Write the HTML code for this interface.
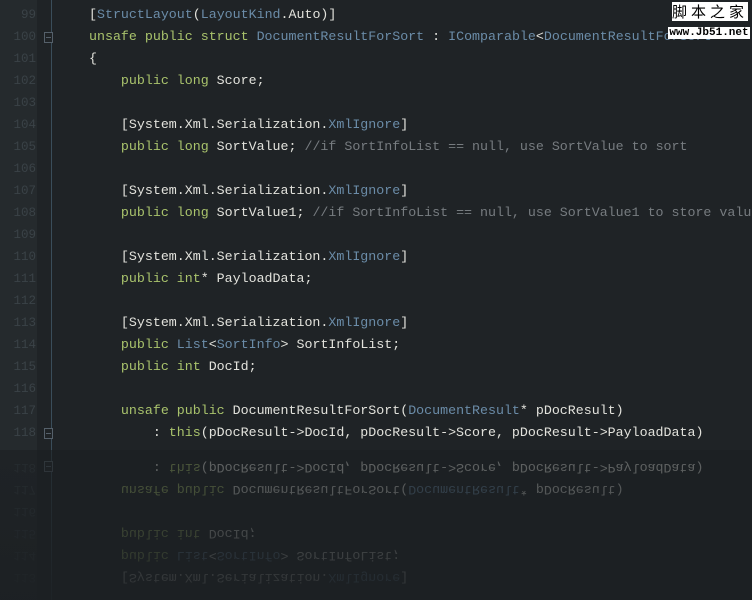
<!DOCTYPE html>
<html><head><meta charset="utf-8"><style>
*{margin:0;padding:0}
html,body{width:752px;height:600px;overflow:hidden}
body{background:#1e2225;position:relative;font-family:"Liberation Mono",monospace;font-size:13.3px}
.ed{position:absolute;left:0;top:0;width:752px;height:450px;overflow:hidden;background:#1f2326}
.gut{position:absolute;left:0;top:0;width:37px;height:100%;background:#252a2d}
.vl{position:absolute;left:51px;top:0;width:1px;height:100%;background:#3a4d5a}
.ln{position:absolute;left:0;width:752px;height:22px;line-height:22px;white-space:pre;color:#e2e2dc;overflow:hidden}
.n{position:absolute;left:0;width:36px;text-align:right;color:#3a4247;font-size:12.5px}
.c{position:absolute;left:89px}
.f{position:absolute;left:44px;top:6px;width:7px;height:9px;border:1px solid #55606a;background:#1f2326;font-size:0}
.f::after{content:"";position:absolute;left:1px;top:4px;width:5px;height:1px;background:#55606a}
.k{color:#a9c36c}.t{color:#6b8ca8}.m{color:#777c80}
.rf{position:absolute;left:0;top:450px;width:752px;height:150px;overflow:hidden;background:#1c2023}
.fl{position:absolute;left:0;top:0;width:752px;height:450px;transform:scaleY(-1);opacity:.36}
.fade{position:absolute;left:0;top:0;width:752px;height:150px;background:linear-gradient(rgba(28,32,35,0),rgba(28,32,35,.8))}
.wm{position:absolute;left:668px;top:2px;width:82px;text-align:center;font-family:"Noto Sans CJK SC",sans-serif;color:#000}
.wm .a{font-size:15px;letter-spacing:4px;background:#fff;line-height:19px;width:76px;margin-left:4px}
.wm .b{font-family:"Liberation Mono",monospace;font-size:11px;background:#fff;line-height:12px;margin-top:6px;font-weight:bold}
</style></head><body>
<div class="ed">
<div class="gut"></div><div class="vl"></div>
<div class="ln" style="top:4px"><span class="n">99</span><span class="c">[<span class="t">StructLayout</span>(<span class="t">LayoutKind</span>.Auto)]</span></div>
<div class="ln" style="top:26px"><span class="n">100</span><span class="f"></span><span class="c"><span class="k">unsafe public struct</span> <span class="t">DocumentResultForSort</span> : <span class="t">IComparable</span>&lt;<span class="t">DocumentResultForSort</span>&gt;</span></div>
<div class="ln" style="top:48px"><span class="n">101</span><span class="c">{</span></div>
<div class="ln" style="top:70px"><span class="n">102</span><span class="c">    <span class="k">public long</span> Score;</span></div>
<div class="ln" style="top:92px"><span class="n">103</span></div>
<div class="ln" style="top:114px"><span class="n">104</span><span class="c">    [System.Xml.Serialization.<span class="t">XmlIgnore</span>]</span></div>
<div class="ln" style="top:136px"><span class="n">105</span><span class="c">    <span class="k">public long</span> SortValue; <span class="m">//if SortInfoList == null, use SortValue to sort</span></span></div>
<div class="ln" style="top:158px"><span class="n">106</span></div>
<div class="ln" style="top:180px"><span class="n">107</span><span class="c">    [System.Xml.Serialization.<span class="t">XmlIgnore</span>]</span></div>
<div class="ln" style="top:202px"><span class="n">108</span><span class="c">    <span class="k">public long</span> SortValue1; <span class="m">//if SortInfoList == null, use SortValue1 to store value</span></span></div>
<div class="ln" style="top:224px"><span class="n">109</span></div>
<div class="ln" style="top:246px"><span class="n">110</span><span class="c">    [System.Xml.Serialization.<span class="t">XmlIgnore</span>]</span></div>
<div class="ln" style="top:268px"><span class="n">111</span><span class="c">    <span class="k">public int</span>* PayloadData;</span></div>
<div class="ln" style="top:290px"><span class="n">112</span></div>
<div class="ln" style="top:312px"><span class="n">113</span><span class="c">    [System.Xml.Serialization.<span class="t">XmlIgnore</span>]</span></div>
<div class="ln" style="top:334px"><span class="n">114</span><span class="c">    <span class="k">public</span> <span class="t">List</span>&lt;<span class="t">SortInfo</span>&gt; SortInfoList;</span></div>
<div class="ln" style="top:356px"><span class="n">115</span><span class="c">    <span class="k">public int</span> DocId;</span></div>
<div class="ln" style="top:378px"><span class="n">116</span></div>
<div class="ln" style="top:400px"><span class="n">117</span><span class="c">    <span class="k">unsafe public</span> DocumentResultForSort(<span class="t">DocumentResult</span>* pDocResult)</span></div>
<div class="ln" style="top:422px"><span class="n">118</span><span class="f"></span><span class="c">        : <span class="k">this</span>(pDocResult-&gt;DocId, pDocResult-&gt;Score, pDocResult-&gt;PayloadData)</span></div>
</div>
<div class="rf">
<div class="fl">
<div class="gut"></div><div class="vl"></div>
<div class="ln" style="top:312px"><span class="n">113</span><span class="c">    [System.Xml.Serialization.<span class="t">XmlIgnore</span>]</span></div>
<div class="ln" style="top:334px"><span class="n">114</span><span class="c">    <span class="k">public</span> <span class="t">List</span>&lt;<span class="t">SortInfo</span>&gt; SortInfoList;</span></div>
<div class="ln" style="top:356px"><span class="n">115</span><span class="c">    <span class="k">public int</span> DocId;</span></div>
<div class="ln" style="top:378px"><span class="n">116</span></div>
<div class="ln" style="top:400px"><span class="n">117</span><span class="c">    <span class="k">unsafe public</span> DocumentResultForSort(<span class="t">DocumentResult</span>* pDocResult)</span></div>
<div class="ln" style="top:422px"><span class="n">118</span><span class="f"></span><span class="c">        : <span class="k">this</span>(pDocResult-&gt;DocId, pDocResult-&gt;Score, pDocResult-&gt;PayloadData)</span></div>
</div>
<div class="fade"></div>
</div>
<div class="wm"><div class="a">脚本之家</div><div class="b">www.Jb51.net</div></div>
</body></html>
